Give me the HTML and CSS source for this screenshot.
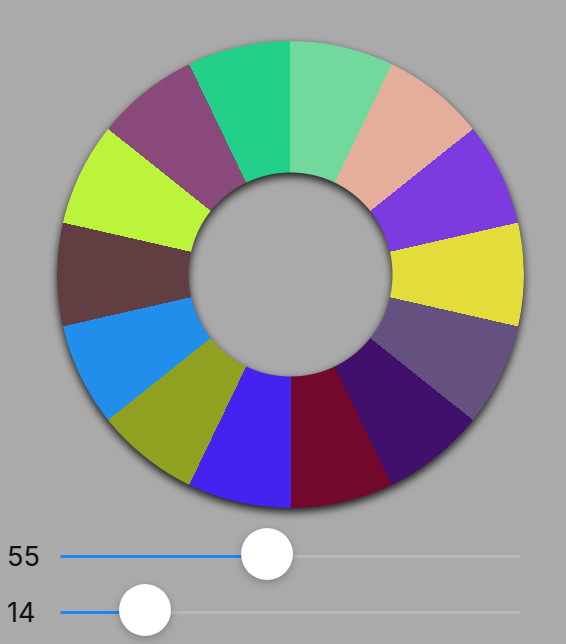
FILE: index.html
```html
<!DOCTYPE html>
<html>
<head>
<meta charset="utf-8">
<link rel="stylesheet" href="styles.css">
</head>
<body>
<div class="page">
  <div class="chart-wrap">
    <div class="donut"></div>
  </div>
  <div class="sliders">
    <div class="row">
      <span class="label">55</span>
      <div class="track">
        <div class="fill" style="width:207px"></div>
        <div class="thumb" style="left:207px"></div>
      </div>
    </div>
    <div class="row">
      <span class="label">14</span>
      <div class="track">
        <div class="fill" style="width:85px"></div>
        <div class="thumb" style="left:85px"></div>
      </div>
    </div>
  </div>
</div>
</body>
</html>
```
FILE: styles.css
```css
html, body {
  margin: 0;
  padding: 0;
  background: #aaaaaa;
}
.page {
  width: 566px;
  height: 644px;
  overflow: hidden;
  font-family: Inter, "Liberation Sans", sans-serif;
}
.chart-wrap {
  width: 467px;
  height: 467px;
  margin: 41px 0 0 57px;
  filter: drop-shadow(0 4px 4px rgba(0, 0, 0, 0.85));
}
.donut {
  width: 467px;
  height: 467px;
  border-radius: 50%;
  background: conic-gradient(
    #70d99b 0 7.1429%,
    #e5ae9a 0 14.2857%,
    #7b3be0 0 21.4286%,
    #e2dd3b 0 28.5714%,
    #65517f 0 35.7143%,
    #410f6c 0 42.8571%,
    #72082c 0 50%,
    #4522ef 0 57.1429%,
    #90a121 0 64.2857%,
    #218eec 0 71.4286%,
    #613e42 0 78.5714%,
    #bcf43c 0 85.7143%,
    #8a497b 0 92.8571%,
    #22d08a 0 100%
  );
  -webkit-mask: radial-gradient(circle at center, transparent 101.5px, #000 102.5px);
  mask: radial-gradient(circle at center, transparent 101.5px, #000 102.5px);
}
.sliders {
  margin-top: 20px;
  display: flex;
  flex-direction: column;
}
.row {
  height: 56px;
  display: flex;
  align-items: center;
}
.label {
  flex: none;
  width: 60px;
  padding-left: 7px;
  box-sizing: border-box;
  font-size: 27px;
  color: #111;
  line-height: 1;
}
.track {
  position: relative;
  width: 460px;
  height: 3px;
  border-radius: 2px;
  background: #b7b7b7;
}
.fill {
  height: 3px;
  border-radius: 2px;
  background: #1d86f2;
}
.thumb {
  position: absolute;
  top: 50%;
  width: 52px;
  height: 52px;
  margin: -28px 0 0 -26px;
  border-radius: 50%;
  background: #ffffff;
  box-shadow: 0 3px 8px rgba(0, 0, 0, 0.22), 0 0 1px rgba(0, 0, 0, 0.2);
}
```
